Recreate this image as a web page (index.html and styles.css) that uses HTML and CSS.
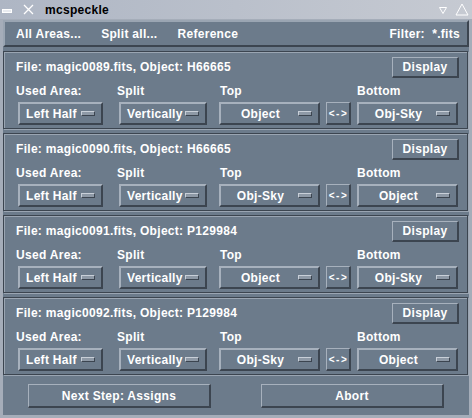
FILE: index.html
```html
<!DOCTYPE html>
<html>
<head>
<meta charset="utf-8">
<link rel="stylesheet" href="styles.css">
</head>
<body>
<div class="titlebar">
  <span class="tb-min"></span>
  <span class="tb-close">
    <svg width="11" height="11" viewBox="0 0 11 11"><path d="M1 1 L10 10 M10 1 L1 10" stroke="#ffffff" stroke-width="1.3" fill="none"/></svg>
  </span>
  <span class="tb-title">mcspeckle</span>
  <span class="tb-right">
    <svg width="10" height="10" viewBox="0 0 10 10"><path d="M1.5 2.5 H8.5 L5 8.5 Z" stroke="#ffffff" stroke-width="1" fill="none"/></svg>
    <svg width="14" height="13" viewBox="0 0 14 13"><path d="M7 1 L13 12 H1 Z" stroke="#ffffff" stroke-width="1" fill="none"/></svg>
  </span>
</div>
<div class="window">
  <div class="menubar">
    <span class="mi">All Areas...</span>
    <span class="mi">Split all...</span>
    <span class="mi">Reference</span>
    <span class="mi filter">Filter:&nbsp; *.fits</span>
  </div>

  <div class="panel">
    <div class="phead"><span>File: magic0089.fits, Object: H66665</span><span class="btn disp">Display</span></div>
    <div class="grid">
      <span class="lbl">Used Area:</span><span class="lbl">Split</span><span class="lbl l3">Top</span><span></span><span class="lbl">Bottom</span>
      <span class="dd w1">Left Half<i></i></span><span class="dd w2">Vertically<i></i></span><span class="dd w3 c">Object<i></i></span><span class="btn swap">&lt;-&gt;</span><span class="dd w3 c">Obj-Sky<i></i></span>
    </div>
  </div>

  <div class="panel">
    <div class="phead"><span>File: magic0090.fits, Object: H66665</span><span class="btn disp">Display</span></div>
    <div class="grid">
      <span class="lbl">Used Area:</span><span class="lbl">Split</span><span class="lbl l3">Top</span><span></span><span class="lbl">Bottom</span>
      <span class="dd w1">Left Half<i></i></span><span class="dd w2">Vertically<i></i></span><span class="dd w3 c">Obj-Sky<i></i></span><span class="btn swap">&lt;-&gt;</span><span class="dd w3 c">Object<i></i></span>
    </div>
  </div>

  <div class="panel">
    <div class="phead"><span>File: magic0091.fits, Object: P129984</span><span class="btn disp">Display</span></div>
    <div class="grid">
      <span class="lbl">Used Area:</span><span class="lbl">Split</span><span class="lbl l3">Top</span><span></span><span class="lbl">Bottom</span>
      <span class="dd w1">Left Half<i></i></span><span class="dd w2">Vertically<i></i></span><span class="dd w3 c">Object<i></i></span><span class="btn swap">&lt;-&gt;</span><span class="dd w3 c">Obj-Sky<i></i></span>
    </div>
  </div>

  <div class="panel">
    <div class="phead"><span>File: magic0092.fits, Object: P129984</span><span class="btn disp">Display</span></div>
    <div class="grid">
      <span class="lbl">Used Area:</span><span class="lbl">Split</span><span class="lbl l3">Top</span><span></span><span class="lbl">Bottom</span>
      <span class="dd w1">Left Half<i></i></span><span class="dd w2">Vertically<i></i></span><span class="dd w3 c">Obj-Sky<i></i></span><span class="btn swap">&lt;-&gt;</span><span class="dd w3 c">Object<i></i></span>
    </div>
  </div>

  <div class="footer">
    <span class="btn big">Next Step: Assigns</span>
    <span class="btn big">Abort</span>
  </div>
</div>
</body>
</html>
```

FILE: styles.css
```css
* { box-sizing: border-box; }
html, body { margin: 0; padding: 0; }
body {
  width: 472px;
  height: 418px;
  background: #6c7b8b;
  font-family: "Liberation Sans", Arial, sans-serif;
  font-weight: bold;
  font-size: 12px;
  letter-spacing: 0.3px;
  color: #ffffff;
  overflow: hidden;
}
.titlebar {
  height: 19px;
  background: linear-gradient(to right, #aeb6c4, #c6cad2);
  display: flex;
  align-items: center;
}
.tb-min {
  width: 10px;
  height: 4px;
  margin-left: 2px;
  margin-top: 2px;
  border: 1px solid #ffffff;
  background: #e8ebf0;
}
.tb-close { margin-left: 11px; display: flex; }
.tb-title { margin-left: 11px; color: #000000; font-size: 12px; }
.tb-right { margin-left: auto; margin-right: 3px; display: flex; gap: 7px; align-items: center; }
.window {
  height: 399px;
  border: 3px solid #a5adb9;
  border-top: 1px solid #a5adb9;
  display: flex;
  flex-direction: column;
}
.menubar {
  height: 27px;
  display: flex;
  align-items: center;
  padding: 0 7px 0 11px;
  border-top: 2px solid #9aa5b2;
  border-left: 2px solid #9aa5b2;
  border-bottom: 2px solid #3c4550;
  border-right: 2px solid #3c4550;
}
.mi { margin-right: 20px; }
.mi.filter { margin-left: auto; margin-right: 0; }
.panel {
  margin-top: 4px;
  height: 78px;
  border: 1px solid #3c4550;
  box-shadow: inset 1px 1px 0 #9aa5b2, 1px 1px 0 #9aa5b2;
  padding: 4px 8px 0 12px;
  margin-right: 1px;
}
.phead {
  display: flex;
  justify-content: space-between;
  align-items: center;
  height: 22px;
}
.btn {
  display: inline-flex;
  align-items: center;
  justify-content: center;
  border-top: 1px solid #a7b1bd;
  border-left: 1px solid #a7b1bd;
  border-bottom: 2px solid #3c4550;
  border-right: 2px solid #3c4550;
}
.disp { width: 67px; height: 21px; margin-top: 1px; }
.grid {
  display: grid;
  grid-template-columns: 101px 102px 107px 31px 101px;
  grid-template-rows: 20px 23px;
  margin-top: 1px;
}
.lbl { line-height: 20px; padding-top: 2px; }
.lbl.l3 { padding-left: 1px; }
.dd {
  position: relative;
  display: flex;
  align-items: center;
  height: 23px;
  margin-top: 3px;
  padding-left: 6px;
  border-top: 2px solid #a7b1bd;
  border-left: 2px solid #a7b1bd;
  border-bottom: 2px solid #3c4550;
  border-right: 2px solid #3c4550;
}
.dd.c { justify-content: center; padding-left: 0; padding-right: 18px; }
.dd i {
  position: absolute;
  right: 6px;
  top: 7px;
  width: 14px;
  height: 5px;
  background: #8e99a6;
  border-top: 1px solid #c8cfd8;
  border-left: 1px solid #c8cfd8;
  border-bottom: 1px solid #3c4550;
  border-right: 1px solid #3c4550;
}
.w1 { width: 85px; margin-left: 2px; }
.w2 { width: 88px; margin-left: 2px; }
.w3 { width: 101px; }
.swap { width: 25px; height: 23px; margin-top: 3px; font-size: 10px; letter-spacing: 1.5px; padding-left: 1px; }
.footer {
  flex: 1;
  display: flex;
  justify-content: flex-start;
  padding: 9px 0 0 25px;
}
.btn.big { width: 183px; height: 24px; }
.btn.big + .btn.big { margin-left: 50px; }
```
